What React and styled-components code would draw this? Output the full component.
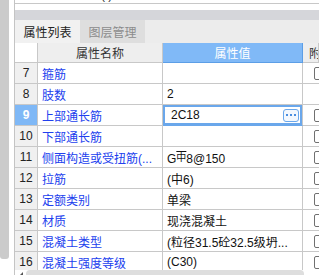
import React from 'react';
import styled, { createGlobalStyle } from 'styled-components';

const Global = createGlobalStyle`
body {
  margin: 0;
  background: #fff;
  font-family: "Liberation Sans", "Noto Sans CJK SC", sans-serif;
  font-size: 12px;
}
`

const Frame = styled.div`
width: 319px;
height: 275px;
display: flex;
overflow: hidden;
background: #fff;
`

const Rail = styled.div`
width: 9px;
flex: none;
`

const RailThumb = styled.div`
height: 259px;
background: #cbcbcb;
border-radius: 0 0 3px 3px;
`

const Panel = styled.div`
margin-left: 5px;
flex: 1;
min-width: 0;
border-left: 1px solid #c4c4c4;
display: flex;
flex-direction: column;
`

const TopStrip = styled.div`
height: 3px;
border-bottom: 1px solid #c8c8c8;
overflow: hidden;
padding-left: 86px;
color: #333;
`

const TopText = styled.div`
margin-top: -12px;
line-height: 14px;
`

const Band = styled.div`
height: 10px;
margin-top: 6px;
background: #d5d6da;
`

const TabBar = styled.div`
height: 23px;
display: flex;
background: #ececec;
`

const Tab = styled.div`
width: 65px;
display: flex;
align-items: center;
justify-content: center;
background: ${p => (p.$active ? '#f1f1f1' : '#dedede')};
color: ${p => (p.$active ? '#222' : '#8c8c8c')};
font-size: 12px;
`

const Grid = styled.div`
display: grid;
grid-template-columns: 23px 125px 140px 1fr;
`

const Body = styled.div`
flex: 1;
overflow: hidden;
`

const HeadCell = styled.div`
height: 20px;
box-sizing: border-box;
display: flex;
align-items: center;
justify-content: ${p => (p.$left ? 'flex-start' : 'center')};
padding-left: ${p => (p.$left ? '6px' : '0')};
background: ${p => (p.$blank ? '#fff' : p.$active ? '#80b9f7' : '#eeeeee')};
color: ${p => (p.$active ? '#fff' : '#333')};
border-right: 1px solid ${p => (p.$active ? '#5c9ee6' : '#c8c8c8')};
border-bottom: 1px solid ${p => (p.$active ? '#5c9ee6' : '#c8c8c8')};
white-space: nowrap;
overflow: hidden;
`

const NumCell = styled.div`
height: 21px;
box-sizing: border-box;
display: flex;
align-items: center;
justify-content: center;
background: ${p => (p.$active ? '#7fb8f6' : '#f0f0f0')};
color: ${p => (p.$active ? '#fff' : '#222')};
font-weight: ${p => (p.$active ? 'bold' : 'normal')};
border-right: 1px solid #c8c8c8;
border-bottom: 1px solid #c8c8c8;
`

const NameCell = styled.div`
height: 21px;
box-sizing: border-box;
display: flex;
align-items: center;
padding-left: 4px;
color: #2140ee;
border-right: 1px solid #c8c8c8;
border-bottom: 1px solid #c8c8c8;
white-space: nowrap;
overflow: hidden;
`

const ValueCell = styled.div`
height: 21px;
box-sizing: border-box;
display: flex;
align-items: center;
justify-content: space-between;
padding: 0 2px 0 ${p => (p.$active ? '8px' : '4px')};
color: #111;
border-right: 1px solid #c8c8c8;
border-bottom: 1px solid ${p => (p.$active ? '#6aa7eb' : '#c8c8c8')};
box-shadow: ${p => (p.$active ? 'inset 0 0 0 2px #6aa7eb' : 'none')};
white-space: nowrap;
overflow: hidden;
`

const MoreButton = styled.div`
width: 16px;
height: 13px;
box-sizing: border-box;
border: 1px solid #6aa7eb;
border-radius: 3px;
background: #f3f8fe;
display: flex;
align-items: center;
justify-content: center;
gap: 2px;
margin-right: 1px;
`

const Dot = styled.span`
width: 2px;
height: 2px;
background: #4a8ee0;
`

const CheckCell = styled.div`
height: 21px;
box-sizing: border-box;
display: flex;
align-items: center;
padding-left: 11px;
border-bottom: 1px solid #c8c8c8;
`

const Box = styled.div`
width: 13px;
height: 13px;
flex: none;
box-sizing: border-box;
border: 1px solid #707070;
border-radius: 2px;
background: #fff;
`

const Steel = styled.span`
font-size: 10px;
vertical-align: 2px;
text-decoration: overline;
`

const HScroll = styled.div`
height: 5px;
display: flex;
align-items: flex-end;
padding-left: 5px;
`

const Arrow = styled.div`
width: 0;
height: 0;
border-top: 3px solid transparent;
border-right: 3px solid #555;
margin-right: 3px;
`

const Thumb = styled.div`
width: 278px;
height: 5px;
background: #dedede;
border-radius: 4px 4px 0 0;
`

const rows = [
    { n: 7, name: '箍筋', value: '', check: true },
    { n: 8, name: '肢数', value: '2', check: false },
    { n: 9, name: '上部通长筋', value: '2C18', check: true, active: true },
    { n: 10, name: '下部通长筋', value: '', check: true },
    { n: 11, name: '侧面构造或受扭筋(...', value: <>G<Steel>中</Steel>8@150</>, check: true },
    { n: 12, name: '拉筋', value: '(中6)', check: true },
    { n: 13, name: '定额类别', value: '单梁', check: true },
    { n: 14, name: '材质', value: '现浇混凝土', check: true },
    { n: 15, name: '混凝土类型', value: '(粒径31.5砼32.5级坍...', check: true },
    { n: 16, name: '混凝土强度等级', value: '(C30)', check: true },
];

const App = () => {
    return (
        <Frame>
            <Global />
            <Rail>
                <RailThumb />
            </Rail>
            <Panel>
                <TopStrip>
                    <TopText>( )</TopText>
                </TopStrip>
                <Band />
                <TabBar>
                    <Tab $active>属性列表</Tab>
                    <Tab>图层管理</Tab>
                </TabBar>
                <Grid>
                    <HeadCell $blank />
                    <HeadCell>属性名称</HeadCell>
                    <HeadCell $active>属性值</HeadCell>
                    <HeadCell $left>附加</HeadCell>
                </Grid>
                <Body>
                    <Grid>
                        {rows.map((row) => (
                            <React.Fragment key={row.n}>
                                <NumCell $active={row.active}>{row.n}</NumCell>
                                <NameCell>{row.name}</NameCell>
                                <ValueCell $active={row.active}>
                                    <span>{row.value}</span>
                                    {row.active && (
                                        <MoreButton>
                                            <Dot /><Dot /><Dot />
                                        </MoreButton>
                                    )}
                                </ValueCell>
                                <CheckCell>{row.check && <Box />}</CheckCell>
                            </React.Fragment>
                        ))}
                    </Grid>
                </Body>
                <HScroll>
                    <Arrow />
                    <Thumb />
                </HScroll>
            </Panel>
        </Frame>
    )
}

export default App;
